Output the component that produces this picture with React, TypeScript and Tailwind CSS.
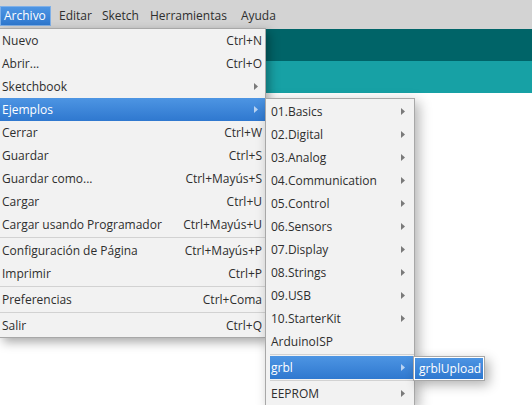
import React from "react";

const font = { fontFamily: '"Open Sans", "Liberation Sans", sans-serif' };

function Arrow({ light }: { light?: boolean }) {
  return (
    <svg width="4" height="7" viewBox="0 0 4 7" className="shrink-0">
      <path d="M0 0 L4 3.5 L0 7 Z" fill={light ? "#b9d3f2" : "#7a7a7a"} />
    </svg>
  );
}

type Item =
  | { sep: true }
  | { label: string; sc?: string; sub?: boolean; hi?: boolean; sep?: false };

const mainItems: Item[] = [
  { label: "Nuevo", sc: "Ctrl+N" },
  { label: "Abrir...", sc: "Ctrl+O" },
  { label: "Sketchbook", sub: true },
  { label: "Ejemplos", sub: true, hi: true },
  { label: "Cerrar", sc: "Ctrl+W" },
  { label: "Guardar", sc: "Ctrl+S" },
  { label: "Guardar como...", sc: "Ctrl+Mayús+S" },
  { label: "Cargar", sc: "Ctrl+U" },
  { label: "Cargar usando Programador", sc: "Ctrl+Mayús+U" },
  { sep: true },
  { label: "Configuración de Página", sc: "Ctrl+Mayús+P" },
  { label: "Imprimir", sc: "Ctrl+P" },
  { sep: true },
  { label: "Preferencias", sc: "Ctrl+Coma" },
  { sep: true },
  { label: "Salir", sc: "Ctrl+Q" },
];

const subItems: Item[] = [
  { label: "01.Basics", sub: true },
  { label: "02.Digital", sub: true },
  { label: "03.Analog", sub: true },
  { label: "04.Communication", sub: true },
  { label: "05.Control", sub: true },
  { label: "06.Sensors", sub: true },
  { label: "07.Display", sub: true },
  { label: "08.Strings", sub: true },
  { label: "09.USB", sub: true },
  { label: "10.StarterKit", sub: true },
  { label: "ArduinoISP" },
  { sep: true },
  { label: "grbl", sub: true, hi: true },
  { sep: true },
  { label: "EEPROM", sub: true },
];

function Row({ it, padL, arrowPad }: { it: Item; padL: string; arrowPad: string }) {
  if (it.sep) {
    return (
      <div className="h-[3px] flex items-center">
        <div className="h-px w-full bg-[#d2d2d2]" />
      </div>
    );
  }
  const hi = it.hi;
  return (
    <div
      className={`h-[23px] flex items-center justify-between pr-[3px] ${padL} ${
        hi
          ? "bg-gradient-to-b from-[#4d95e3] to-[#2f78cf] text-white"
          : "text-[#2e2e2e]"
      }`}
    >
      <span className="whitespace-nowrap">{it.label}</span>
      {it.sc ? (
        <span className="whitespace-nowrap">{it.sc}</span>
      ) : it.sub ? (
        <span className={arrowPad}>
          <Arrow light={hi} />
        </span>
      ) : null}
    </div>
  );
}

export default function App() {
  return (
    <div
      className="relative w-[532px] h-[405px] overflow-hidden bg-white text-[12px]"
      style={font}
    >
      {/* menubar */}
      <div className="h-[29px] bg-[#d3d3d3] flex items-start pt-[6px] text-[#2e2e2e]">
        <div className="h-[20px] pl-[3px] flex items-center bg-gradient-to-b from-[#4d95e3] to-[#2f78cf] text-white border border-[#7fb0e8] w-[51px]">
          Archivo
        </div>
        <div className="h-[20px] flex items-center pl-[8px]">Editar</div>
        <div className="h-[20px] flex items-center pl-[10px]">Sketch</div>
        <div className="h-[20px] flex items-center pl-[11px]">Herramientas</div>
        <div className="h-[20px] flex items-center pl-[14px]">Ayuda</div>
      </div>
      {/* teal bands */}
      <div className="h-[32px] bg-[#006468]" />
      <div className="h-[32px] bg-[#17a1a5]" />

      {/* main menu */}
      <div className="absolute left-0 top-[28px] w-[266px] bg-[#f2f2f2] border-t border-r border-b border-[#a8a8a8] shadow-[3px_4px_10px_rgba(0,0,0,0.35)]">
        {mainItems.map((it, i) => (
          <Row key={i} it={it} padL="pl-[2px]" arrowPad="pr-[4px]" />
        ))}
      </div>

      {/* examples submenu */}
      <div className="absolute left-[265px] top-[98px] w-[150px] bg-[#f2f2f2] border border-[#a8a8a8] pt-px shadow-[4px_4px_12px_rgba(0,0,0,0.3)] pl-[4px]">
        {subItems.map((it, i) => (
          <Row key={i} it={it} padL="pl-[1px]" arrowPad="pr-[6px]" />
        ))}
      </div>

      {/* grbl submenu */}
      <div className="absolute left-[413px] top-[356px] w-[72px] h-[25px] border border-[#a8a8a8] bg-white p-px shadow-[4px_4px_12px_rgba(0,0,0,0.3)]">
        <div className="h-full bg-gradient-to-b from-[#4d95e3] to-[#2f78cf] text-white flex items-center pl-[4px]">
          grblUpload
        </div>
      </div>
    </div>
  );
}
